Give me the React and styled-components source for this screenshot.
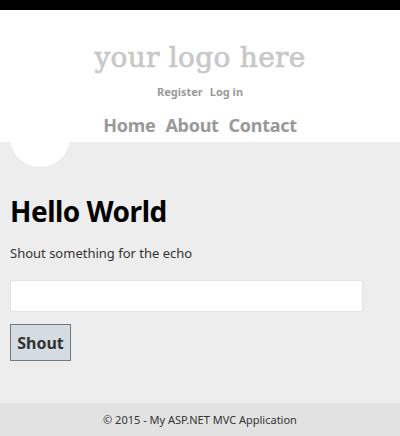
import React from "react";
import styled, { createGlobalStyle } from "styled-components";

const Global = createGlobalStyle`
  html, body { margin: 0; padding: 0; background: #ededed; }
  body { font-family: "Noto Sans", "Open Sans", sans-serif; color: #333; }
`;

const Page = styled.div`
  display: flex;
  flex-direction: column;
  min-height: 436px;
  position: relative;
  overflow: hidden;
`;

const TopBar = styled.div`
  height: 10px;
  background: #000;
`;

const Header = styled.header`
  background: #fff;
  height: 132px;
  box-sizing: border-box;
  padding-top: 30px;
  display: flex;
  flex-direction: column;
  align-items: center;
`;

const Logo = styled.div`
  font-family: "DejaVu Serif", "Liberation Serif", serif;
  font-weight: 400;
  font-size: 28px;
  line-height: 36px;
  color: #c8c8c8;
  -webkit-text-stroke: 0.7px #c8c8c8;
  letter-spacing: 0.3px;
`;

const LoginBar = styled.div`
  display: flex;
  gap: 7px;
  margin-top: 8px;
  font-size: 11px;
  font-weight: 700;
  line-height: 16px;
`;

const NavBar = styled.nav`
  display: flex;
  gap: 10px;
  margin-top: 13px;
  font-size: 18px;
  font-weight: 700;
  line-height: 24px;
  letter-spacing: -0.3px;
`;

const Link = styled.a`
  color: #999;
  text-decoration: none;
`;

const Circle = styled.div`
  position: absolute;
  left: 10px;
  top: 107px;
  width: 60px;
  height: 60px;
  border-radius: 50%;
  background: #fff;
`;

const Main = styled.main`
  flex: 1;
  padding: 50px 10px 0;
  display: flex;
  flex-direction: column;
  align-items: flex-start;
`;

const Title = styled.h1`
  margin: 0;
  font-size: 28px;
  line-height: 38px;
  font-weight: 700;
  color: #000;
  letter-spacing: -0.5px;
`;

const Text = styled.p`
  margin: 13px 0 0;
  font-size: 13px;
  line-height: 20px;
  color: #333;
`;

const Input = styled.input`
  margin-top: 17px;
  width: 353px;
  height: 32px;
  box-sizing: border-box;
  border: 1px solid #e2e2e2;
  background: #fff;
  outline: none;
`;

const Button = styled.button`
  margin-top: 12px;
  width: 61px;
  height: 37px;
  box-sizing: border-box;
  border: 1px solid #787878;
  background: #d4dce2;
  color: #333;
  font-family: "Noto Sans", "Open Sans", sans-serif;
  font-size: 16px;
  font-weight: 700;
  padding: 0;
`;

const Footer = styled.footer`
  height: 33px;
  background: #e2e2e2;
  display: flex;
  align-items: center;
  justify-content: center;
  font-size: 11px;
  color: #333;
`;

export default function App() {
  return (
    <Page>
      <Global />
      <TopBar />
      <Circle />
      <Header>
        <Logo>your logo here</Logo>
        <LoginBar>
          <Link href="#">Register</Link>
          <Link href="#">Log in</Link>
        </LoginBar>
        <NavBar>
          <Link href="#">Home</Link>
          <Link href="#">About</Link>
          <Link href="#">Contact</Link>
        </NavBar>
      </Header>
      <Main>
        <Title>Hello World</Title>
        <Text>Shout something for the echo</Text>
        <Input type="text" />
        <Button>Shout</Button>
      </Main>
      <Footer>© 2015 - My ASP.NET MVC Application</Footer>
    </Page>
  );
}
